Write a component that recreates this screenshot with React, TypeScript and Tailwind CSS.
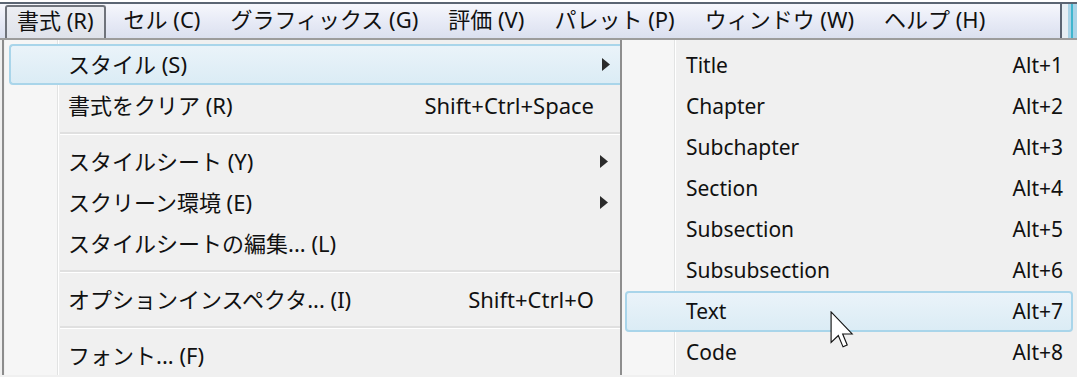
import React from "react";

const menubar = [
  "書式 (R)",
  "セル (C)",
  "グラフィックス (G)",
  "評価 (V)",
  "パレット (P)",
  "ウィンドウ (W)",
  "ヘルプ (H)",
];

type Item =
  | { sep: true }
  | { label: string; key?: string; sub?: boolean; hot?: boolean; sep?: false };

const formatMenu: Item[] = [
  { label: "スタイル (S)", sub: true, hot: true },
  { label: "書式をクリア (R)", key: "Shift+Ctrl+Space" },
  { sep: true },
  { label: "スタイルシート (Y)", sub: true },
  { label: "スクリーン環境 (E)", sub: true },
  { label: "スタイルシートの編集... (L)" },
  { sep: true },
  { label: "オプションインスペクタ... (I)", key: "Shift+Ctrl+O" },
  { sep: true },
  { label: "フォント... (F)" },
];

const styles = [
  ["Title", "Alt+1"],
  ["Chapter", "Alt+2"],
  ["Subchapter", "Alt+3"],
  ["Section", "Alt+4"],
  ["Subsection", "Alt+5"],
  ["Subsubsection", "Alt+6"],
  ["Text", "Alt+7"],
  ["Code", "Alt+8"],
];

function Arrow() {
  return (
    <svg width="8" height="13" viewBox="0 0 8 13" className="block">
      <polygon points="0,0 8,6.5 0,13" fill="#2b2b2b" />
    </svg>
  );
}

// windows arrow pointer, sits over the hovered "Text" row
function Cursor() {
  return (
    <svg
      width="24"
      height="37"
      viewBox="0 0 12.5 19.5"
      className="absolute left-[203px] top-[18px] pointer-events-none"
    >
      <path
        d="M0.5 0.5 L0.5 16.5 L4.3 12.9 L6.8 18.9 L9 17.9 L6.6 12.1 L11.6 12.1 Z"
        fill="#fff"
        stroke="#111"
        strokeWidth="0.6"
      />
    </svg>
  );
}

const hotRow =
  "border-2 border-[#a9d5ea] rounded-[4px] bg-[linear-gradient(to_bottom,#eaf3f9,#dbecf5)]";

export default function App() {
  return (
    <div className="w-[1077px] h-[377px] overflow-hidden bg-[#f0f0f0] text-[#111] text-[22px] font-['Noto_Sans','Noto_Sans_CJK_JP',sans-serif]">
      {/* menu bar */}
      <div className="flex h-[40px] bg-white pt-[2px] border-b-2 border-[#9c9c9c]">
        <div className="flex-1 flex items-end pl-[5px] border-t-2 border-[#5b6573] bg-[linear-gradient(to_bottom,#f6f7fc,#e9ecf7_45%,#dbe0ef)]">
          {menubar.map((m, i) => (
            <div
              key={m}
              className={
                "h-[33px] flex items-center px-[10px] mr-[6px] whitespace-nowrap leading-none pb-[5px] " +
                (i === 0
                  ? "border-2 border-b-0 border-[#6f737b] rounded-t-[3px] bg-[linear-gradient(to_bottom,#eceef3,#dfe2ea)]"
                  : "border-2 border-transparent")
              }
            >
              {m}
            </div>
          ))}
        </div>
        <div className="w-[17px] flex border-t-2 border-[#5b6573]">
          <div className="w-[2px] bg-[#5b6573]" />
          <div className="w-[6px] bg-[#e6eef4]" />
          <div className="w-[3px] bg-[#a9d3e6]" />
          <div className="w-[2px] bg-[#3fb6cf]" />
          <div className="flex-1 bg-[#a9d3e6]" />
        </div>
      </div>

      <div className="flex h-[335px]">
        {/* format menu */}
        <div className="w-[618px] ml-[2px] border-l-2 border-[#8c8c8c] pt-[4px] bg-[linear-gradient(to_right,#f0f0f0_0_1px,#f6f6f6_1px_53px,#e2e3e3_53px_54px,#ffffff_54px_55px,#f0f0f0_55px)]">
          {formatMenu.map((it, i) =>
            it.sep ? (
              <div key={i} className="h-[15px] ml-[56px] flex items-center">
                <div className="w-full h-[3px] bg-[#e0e0e0] border-b border-white" />
              </div>
            ) : (
              <div
                key={i}
                className={
                  "h-[41px] ml-[5px] flex items-center pl-[57px] whitespace-nowrap " +
                  (it.hot ? hotRow + " border-r-0 rounded-r-none" : "border-2 border-transparent")
                }
              >
                <span className="flex-1">{it.label}</span>
                {it.key && <span className="mr-[24px]">{it.key}</span>}
                {it.sub && (
                  <span className="w-[24px] pl-[6px] flex items-center">
                    <Arrow />
                  </span>
                )}
              </div>
            )
          )}
        </div>

        {/* style submenu */}
        <div className="flex-1 border-l-2 border-[#8e8e8e] pt-[5px] text-[21px] bg-[linear-gradient(to_right,#f6f6f6_0_52px,#e2e3e3_52px_53px,#ffffff_53px_54px,#f0f0f0_54px)]">
          {styles.map(([name, key]) => (
            <div
              key={name}
              className={
                "relative h-[41px] ml-[3px] mr-[4px] flex items-center pl-[59px] pr-[8px] " +
                (name === "Text" ? hotRow : "border-2 border-transparent")
              }
            >
              <span className="flex-1">{name}</span>
              <span>{key}</span>
              {name === "Text" && <Cursor />}
            </div>
          ))}
        </div>
      </div>
    </div>
  );
}
